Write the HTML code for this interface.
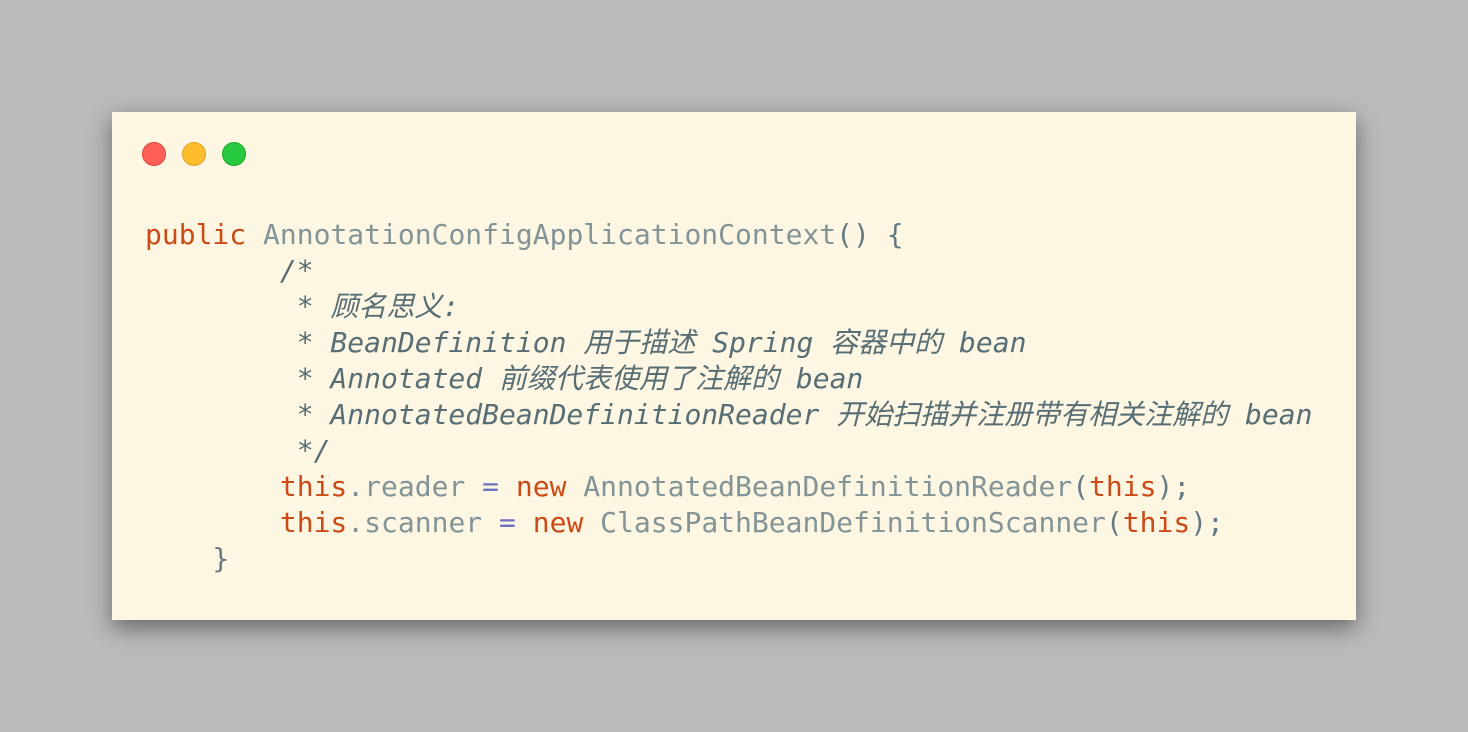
<!DOCTYPE html>
<html><head><meta charset="utf-8"><style>
html,body{margin:0;padding:0;width:1468px;height:732px;background:#bbbbbb;overflow:hidden}
.card{position:absolute;left:112px;top:112px;width:1244px;height:508px;background:#fdf6e3;box-shadow:0 8px 22px rgba(0,0,0,.45)}
.dot{position:absolute;top:30px;width:24px;height:24px;border-radius:50%;box-sizing:border-box}
pre{position:absolute;left:33px;top:105px;margin:0;font-family:"DejaVu Sans Mono","Liberation Mono","Noto Sans CJK SC",monospace;font-size:28px;line-height:36px;color:#839496}
.k{color:#cb4b16}.o{color:#6c71c4}.c{color:#586e75;font-style:italic}.p{color:#657b83}
</style></head><body>
<div class="card">
<div class="dot" style="left:30px;background:#ff5f56;border:1px solid #e0443e"></div>
<div class="dot" style="left:70px;background:#ffbd2e;border:1px solid #dea123"></div>
<div class="dot" style="left:110px;background:#27c93f;border:1px solid #1aab29"></div>
<pre><span class="k">public</span> AnnotationConfigApplicationContext<span class="p">() {</span>
<span class="c">        /*
         * 顾名思义:
         * BeanDefinition 用于描述 Spring 容器中的 bean
         * Annotated 前缀代表使用了注解的 bean
         * AnnotatedBeanDefinitionReader 开始扫描并注册带有相关注解的 bean
         */</span>
        <span class="k">this</span>.reader <span class="o">=</span> <span class="k">new</span> AnnotatedBeanDefinitionReader<span class="p">(</span><span class="k">this</span><span class="p">);</span>
        <span class="k">this</span>.scanner <span class="o">=</span> <span class="k">new</span> ClassPathBeanDefinitionScanner<span class="p">(</span><span class="k">this</span><span class="p">);</span>
<span class="p">    }</span></pre>
</div>
</body></html>
